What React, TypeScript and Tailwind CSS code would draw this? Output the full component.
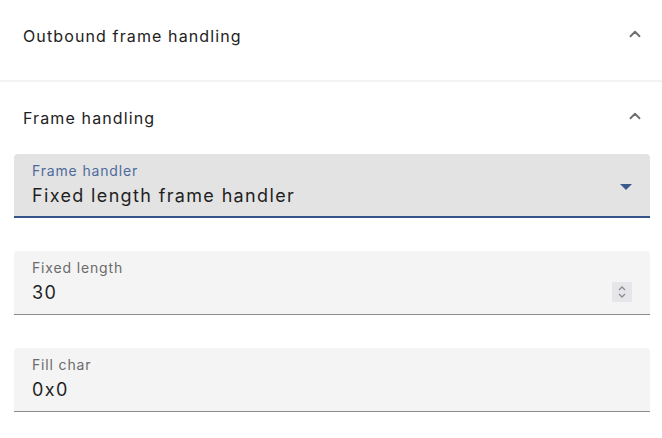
import { ChevronUp } from 'lucide-react'

const font = { fontFamily: 'Inter, "Noto Sans", sans-serif' }

function AccordionHeader({ title, height }: { title: string; height: string }) {
  return (
    <div className={`flex items-center justify-between pl-[23px] pr-[18px] ${height}`}>
      <span className="text-[16px] tracking-[0.07em] text-[#222222]">{title}</span>
      <ChevronUp className="w-[18px] h-[18px] text-[#6f6f6f] -mt-[5px]" strokeWidth={2.5} />
    </div>
  )
}

function TextField({ label, value, spinner }: { label: string; value: string; spinner?: boolean }) {
  return (
    <div className="relative h-[64px] bg-[#f4f4f4] rounded-t-[4px] border-b border-[#8c8c8c] pl-[18px] pt-[9px]">
      <div className="text-[14px] leading-[16px] tracking-[0.06em] text-[#6b6b6b]">{label}</div>
      <div className="mt-[5px] text-[18px] leading-[24px] tracking-[0.075em] text-[#1f1f1f]">{value}</div>
      {spinner && (
        <div className="absolute right-[18px] top-[31px] w-[20px] h-[20px] bg-[#e6e6ea] flex flex-col items-center justify-center">
          <svg width="10" height="14" viewBox="0 0 10 14" fill="none" stroke="#8a8a8f" strokeWidth="1.3">
            <path d="M2 5l3-3 3 3" />
            <path d="M2 9l3 3 3-3" />
          </svg>
        </div>
      )}
    </div>
  )
}

export default function App() {
  return (
    <main className="w-[662px] h-[438px] bg-white overflow-hidden" style={font}>
      <AccordionHeader title="Outbound frame handling" height="h-[80px] pb-[8px]" />
      <div className="h-[2px] bg-[#f3f3f3]" />
      <AccordionHeader title="Frame handling" height="h-[72px]" />

      <div className="pl-[14px] pr-[12px] flex flex-col">
        {/* Frame handler select */}
        <div className="relative h-[64px] bg-[#e3e3e3] rounded-t-[4px] border-b-2 border-[#34548b] pl-[18px] pt-[9px]">
          <div className="text-[14px] leading-[16px] tracking-[0.06em] text-[#4e6b9c]">Frame handler</div>
          <div className="mt-[5px] text-[18px] leading-[24px] tracking-[0.075em] text-[#1f1f1f]">Fixed length frame handler</div>
          <svg className="absolute right-[18px] top-[29px]" width="12" height="8" viewBox="0 0 12 8">
            <path d="M0 1h12L6 7z" fill="#3a5a8c" />
          </svg>
        </div>

        <div className="mt-[33px]">
          <TextField label="Fixed length" value="30" spinner />
        </div>
        <div className="mt-[33px]">
          <TextField label="Fill char" value="0x0" />
        </div>
      </div>
    </main>
  )
}
